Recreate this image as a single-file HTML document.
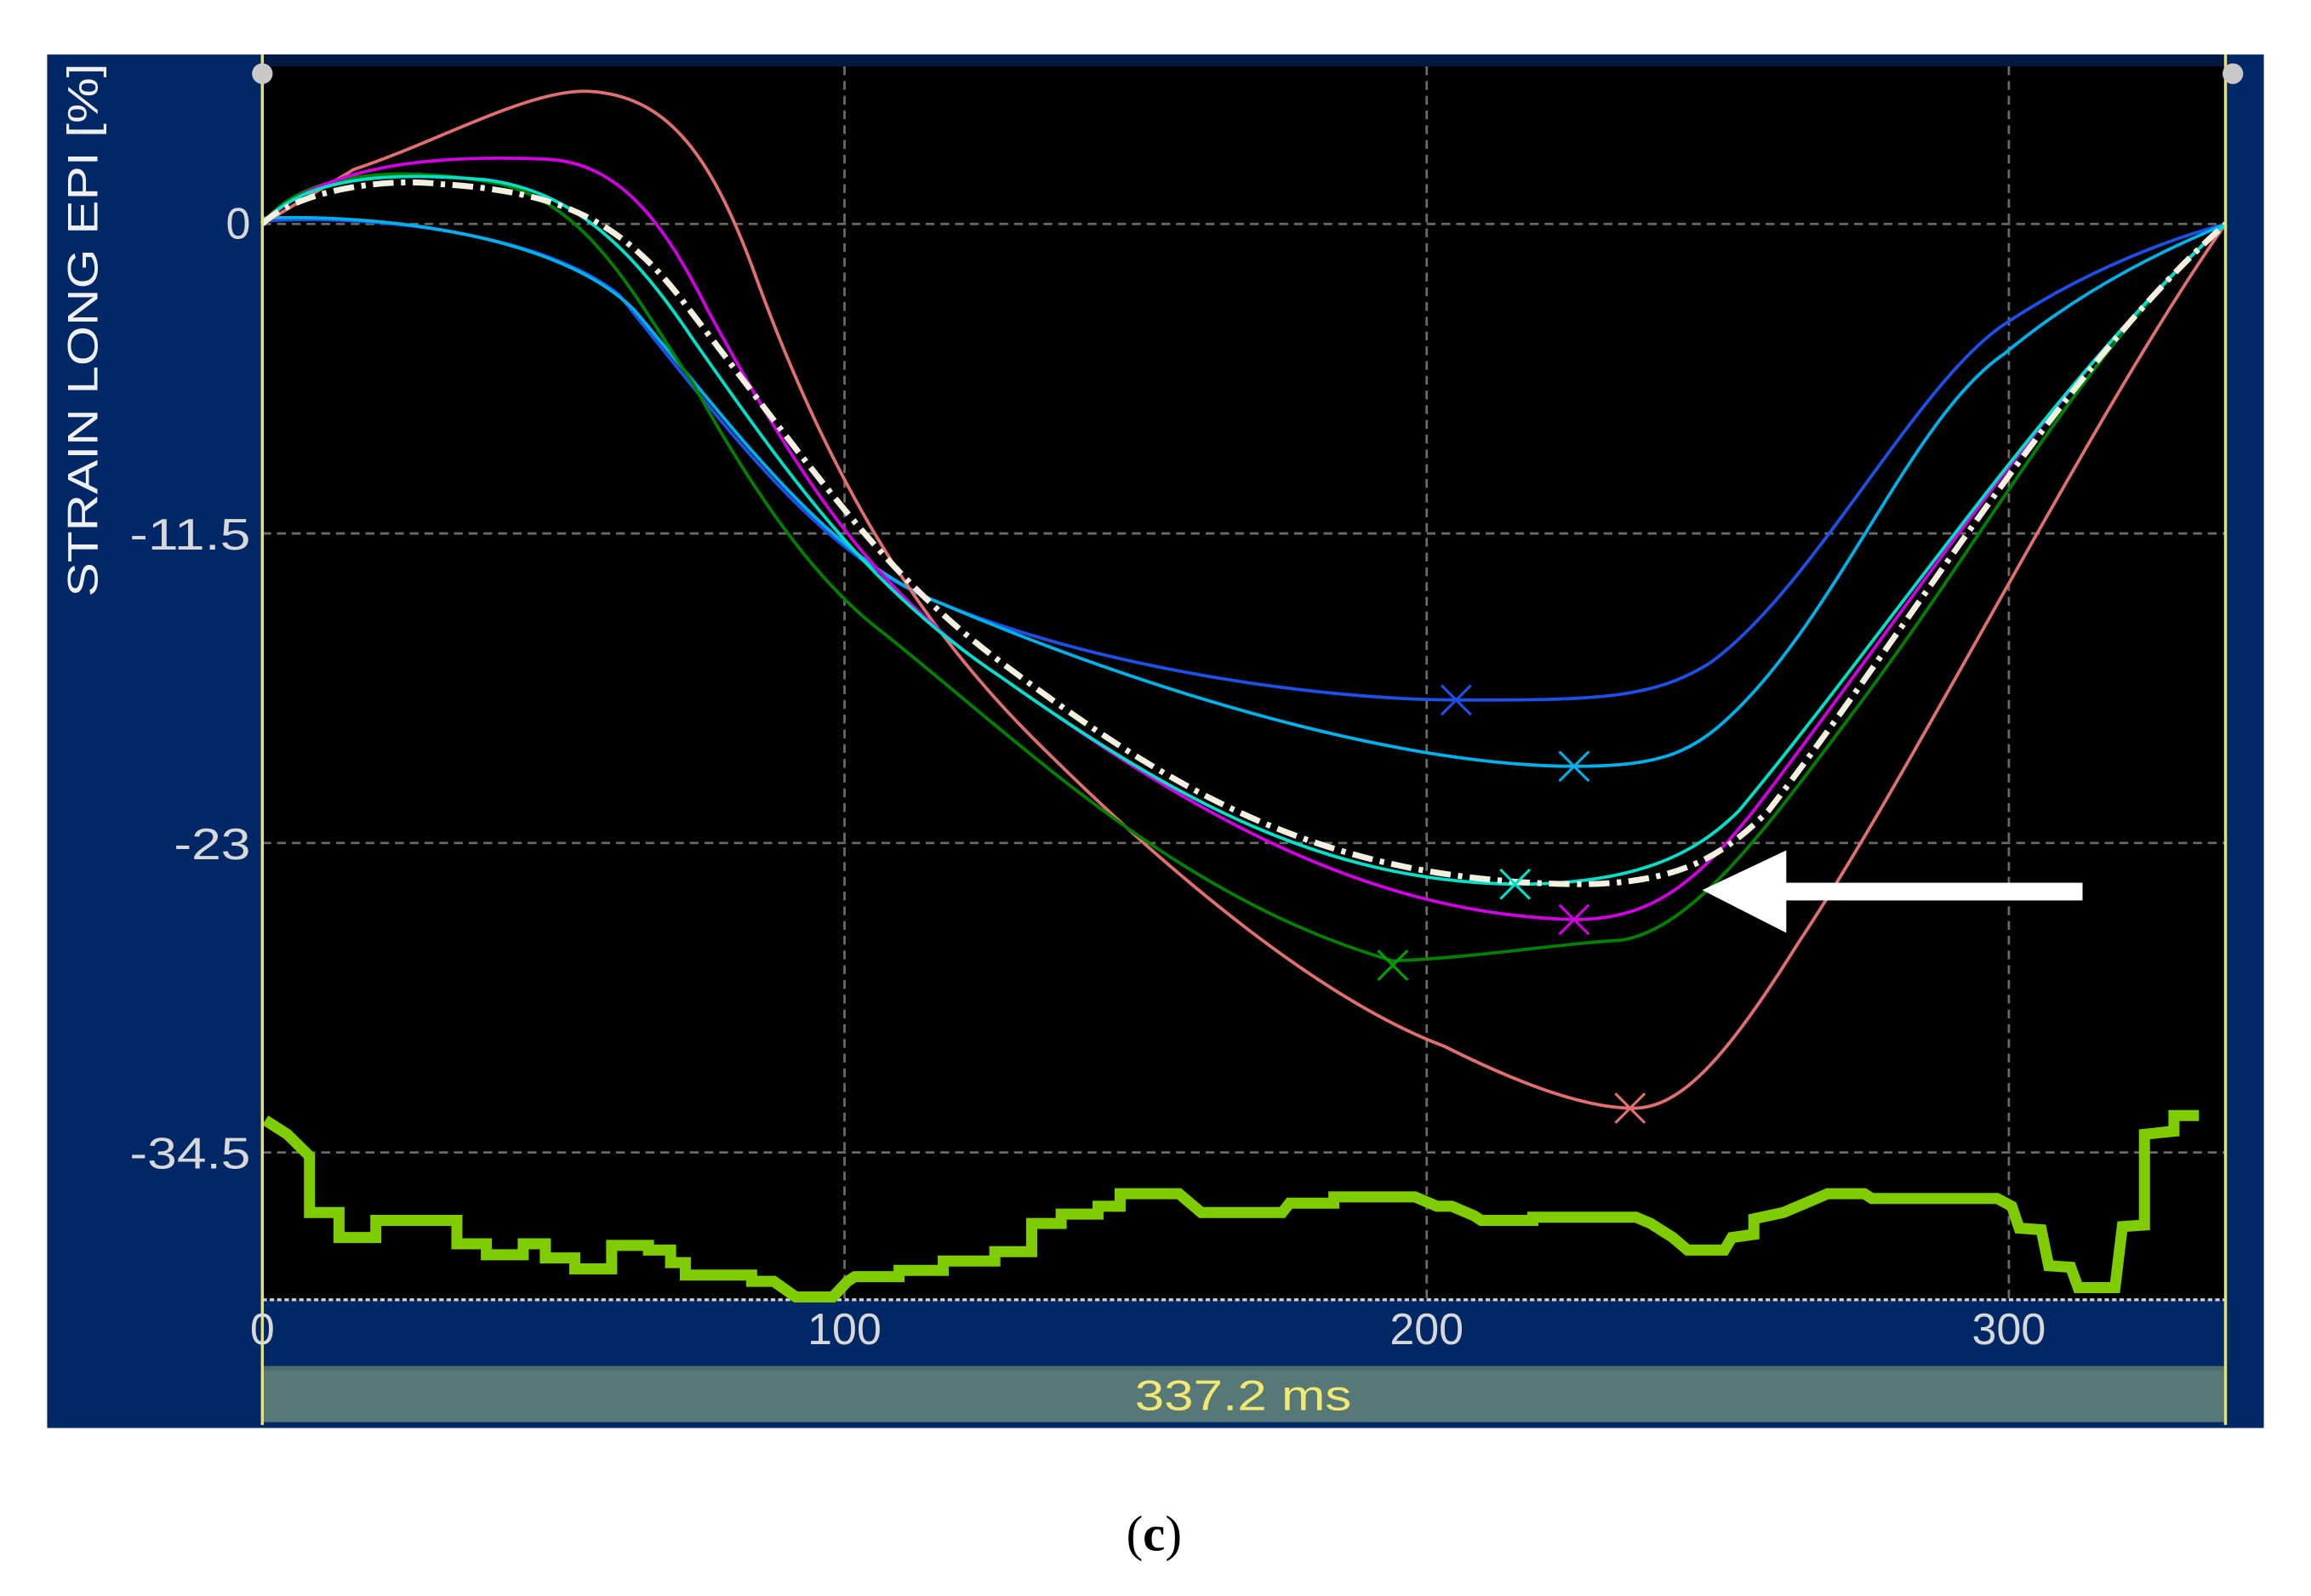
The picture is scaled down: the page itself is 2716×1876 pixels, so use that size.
<!DOCTYPE html>
<html><head><meta charset="utf-8"><style>
html,body{margin:0;padding:0;background:#fff;width:2716px;height:1876px;overflow:hidden}
svg{display:block}
</style></head><body>
<svg width="2716" height="1876" viewBox="0 0 1568 1083" preserveAspectRatio="none" xmlns="http://www.w3.org/2000/svg">
<rect x="0" y="0" width="1568" height="1083" fill="#fff"/>
<rect x="32" y="37" width="1504" height="932" fill="#002866"/>
<rect x="178" y="37" width="1332" height="8" fill="#001a44"/>
<rect x="178" y="45" width="1332" height="837" fill="#000"/>
<rect x="178" y="927" width="1332" height="38" fill="#577876"/>
<rect x="178" y="927" width="1332" height="3" fill="#4e6e6c"/>
<g stroke="#6a6a6a" stroke-width="1.6" stroke-dasharray="6,4" fill="none">
<line x1="178" y1="152" x2="1510" y2="152"/>
<line x1="178" y1="362" x2="1510" y2="362"/>
<line x1="178" y1="572" x2="1510" y2="572"/>
<line x1="178" y1="782" x2="1510" y2="782"/>
<line x1="573" y1="45" x2="573" y2="882"/>
<line x1="968" y1="45" x2="968" y2="882"/>
<line x1="1363" y1="45" x2="1363" y2="882"/>
</g>
<line x1="178" y1="882" x2="1510" y2="882" stroke="#d0d0d0" stroke-width="2" stroke-dasharray="3,2"/>
<g transform="translate(0,750.6) scale(1,0.2123)">
<polyline fill="none" stroke="#7fcc00" stroke-width="13" vector-effect="non-scaling-stroke" stroke-linejoin="miter" points="180,45 195,90 210,160 210,340 230,340 230,420 255,420 255,365 310,365 310,440 330,440 330,475 355,475 355,440 370,440 370,485 390,485 390,520 415,520 415,445 440,445 440,460 455,460 455,500 465,500 465,540 510,540 510,560 525,560 540,610 565,610 575,560 580,545 610,545 610,525 640,525 640,495 675,495 675,465 700,465 700,375 720,375 720,345 745,345 745,320 760,320 760,280 800,280 815,340 870,340 875,310 905,310 905,290 960,290 975,320 985,320 1000,350 1005,365 1040,365 1040,355 1110,355 1120,375 1135,420 1145,460 1170,460 1175,420 1190,410 1190,360 1210,340 1225,310 1240,280 1265,280 1270,295 1355,295 1365,320 1370,390 1385,395 1390,510 1405,515 1410,580 1435,580 1440,385 1455,380 1455,90 1475,80 1475,30 1492,30"/>
</g>
<g fill="none" stroke-width="2.2">
<path stroke="#1e50e6" d="M178,150 C260,145 370,160 420,200 C500,300 560,380 640,410 C750,455 900,475 990,475 C1080,475 1120,475 1160,450 C1230,400 1300,260 1360,220 C1420,180 1480,160 1510,152"/>
<path stroke="#00b0e8" d="M178,148 C260,145 380,160 430,210 C490,280 560,380 640,410 C780,470 950,520 1068,520 C1130,520 1150,510 1180,480 C1250,410 1300,280 1360,240 C1420,190 1480,165 1510,152"/>
<path stroke="#e07070" d="M178,152 L240,115 C300,95 360,60 400,62 C450,65 480,100 510,180 C560,320 620,420 700,500 C800,600 900,680 980,710 C1040,740 1080,752 1108,752 C1140,752 1170,720 1220,640 C1300,520 1420,280 1510,152"/>
<path stroke="#008000" d="M178,152 C210,110 290,115 340,125 C400,140 430,200 470,260 C520,350 560,400 600,430 C700,510 800,610 945,652 C1000,650 1060,640 1100,638 C1150,630 1200,560 1260,480 C1350,360 1420,230 1510,152"/>
<path stroke="#d000e0" d="M178,152 C220,110 300,105 370,108 C420,110 450,150 480,210 C540,320 590,400 680,460 C800,545 920,620 1068,624 C1120,624 1150,600 1190,550 C1290,420 1400,250 1510,152"/>
<path stroke="#00e0c8" d="M178,152 C210,115 280,118 330,122 C390,130 430,170 470,230 C540,330 590,400 680,460 C800,545 900,598 1028,600 C1110,600 1150,580 1180,550 C1280,430 1400,250 1510,152"/>
<path stroke="#f4f0e0" stroke-width="4" stroke-dasharray="14,5,3,5" d="M178,152 C200,130 260,120 300,125 C380,130 420,150 460,200 C560,330 600,390 680,450 C800,540 900,598 1070,600 C1140,600 1170,580 1200,550 C1300,420 1400,250 1510,152"/>
</g>
<g stroke-width="1.8" fill="none">
<path stroke="#1e50e6" d="M978,465 l20,20 M998,465 l-20,20"/>
<path stroke="#00b0e8" d="M1058,510 l20,20 M1078,510 l-20,20"/>
<path stroke="#00e0c8" d="M1018,590 l20,20 M1038,590 l-20,20"/>
<path stroke="#d000e0" d="M1058,614 l20,20 M1078,614 l-20,20"/>
<path stroke="#00a000" d="M935,645 l20,20 M955,645 l-20,20"/>
<path stroke="#e07070" d="M1096,742 l20,20 M1116,742 l-20,20"/>
</g>
<rect x="1205" y="599" width="208" height="12" fill="#fff"/>
<polygon points="1155,604 1212,577 1212,633" fill="#fff"/>
<line x1="178" y1="37" x2="178" y2="967" stroke="#e8e070" stroke-width="2"/>
<line x1="1510" y1="37" x2="1510" y2="967" stroke="#e8e070" stroke-width="2"/>
<circle cx="178" cy="50" r="7" fill="#c8c8c8"/>
<circle cx="1515" cy="50" r="7" fill="#c8c8c8"/>
<g font-family="Liberation Sans, sans-serif" font-size="30" fill="#d8d8d8">
<text x="170" y="162" text-anchor="end">0</text>
<text x="88" y="373" textLength="82" lengthAdjust="spacingAndGlyphs">-11.5</text>
<text x="118" y="583" textLength="52" lengthAdjust="spacingAndGlyphs">-23</text>
<text x="88" y="793" textLength="82" lengthAdjust="spacingAndGlyphs">-34.5</text>
<text x="178" y="912" text-anchor="middle">0</text>
<text x="573" y="912" text-anchor="middle">100</text>
<text x="968" y="912" text-anchor="middle">200</text>
<text x="1363" y="912" text-anchor="middle">300</text>
</g>
<text transform="translate(66,405) rotate(-90)" font-family="Liberation Sans, sans-serif" font-size="29" fill="#f0f0f0" textLength="362" lengthAdjust="spacingAndGlyphs">STRAIN LONG EPI [%]</text>
<text x="770" y="957" font-family="Liberation Sans, sans-serif" font-size="29" fill="#f0e870" textLength="147" lengthAdjust="spacingAndGlyphs">337.2 ms</text>
<text x="783" y="1052" font-family="Liberation Serif, serif" font-size="34" fill="#000" text-anchor="middle">(<tspan font-weight="bold">c</tspan>)</text>
</svg>
</body></html>
